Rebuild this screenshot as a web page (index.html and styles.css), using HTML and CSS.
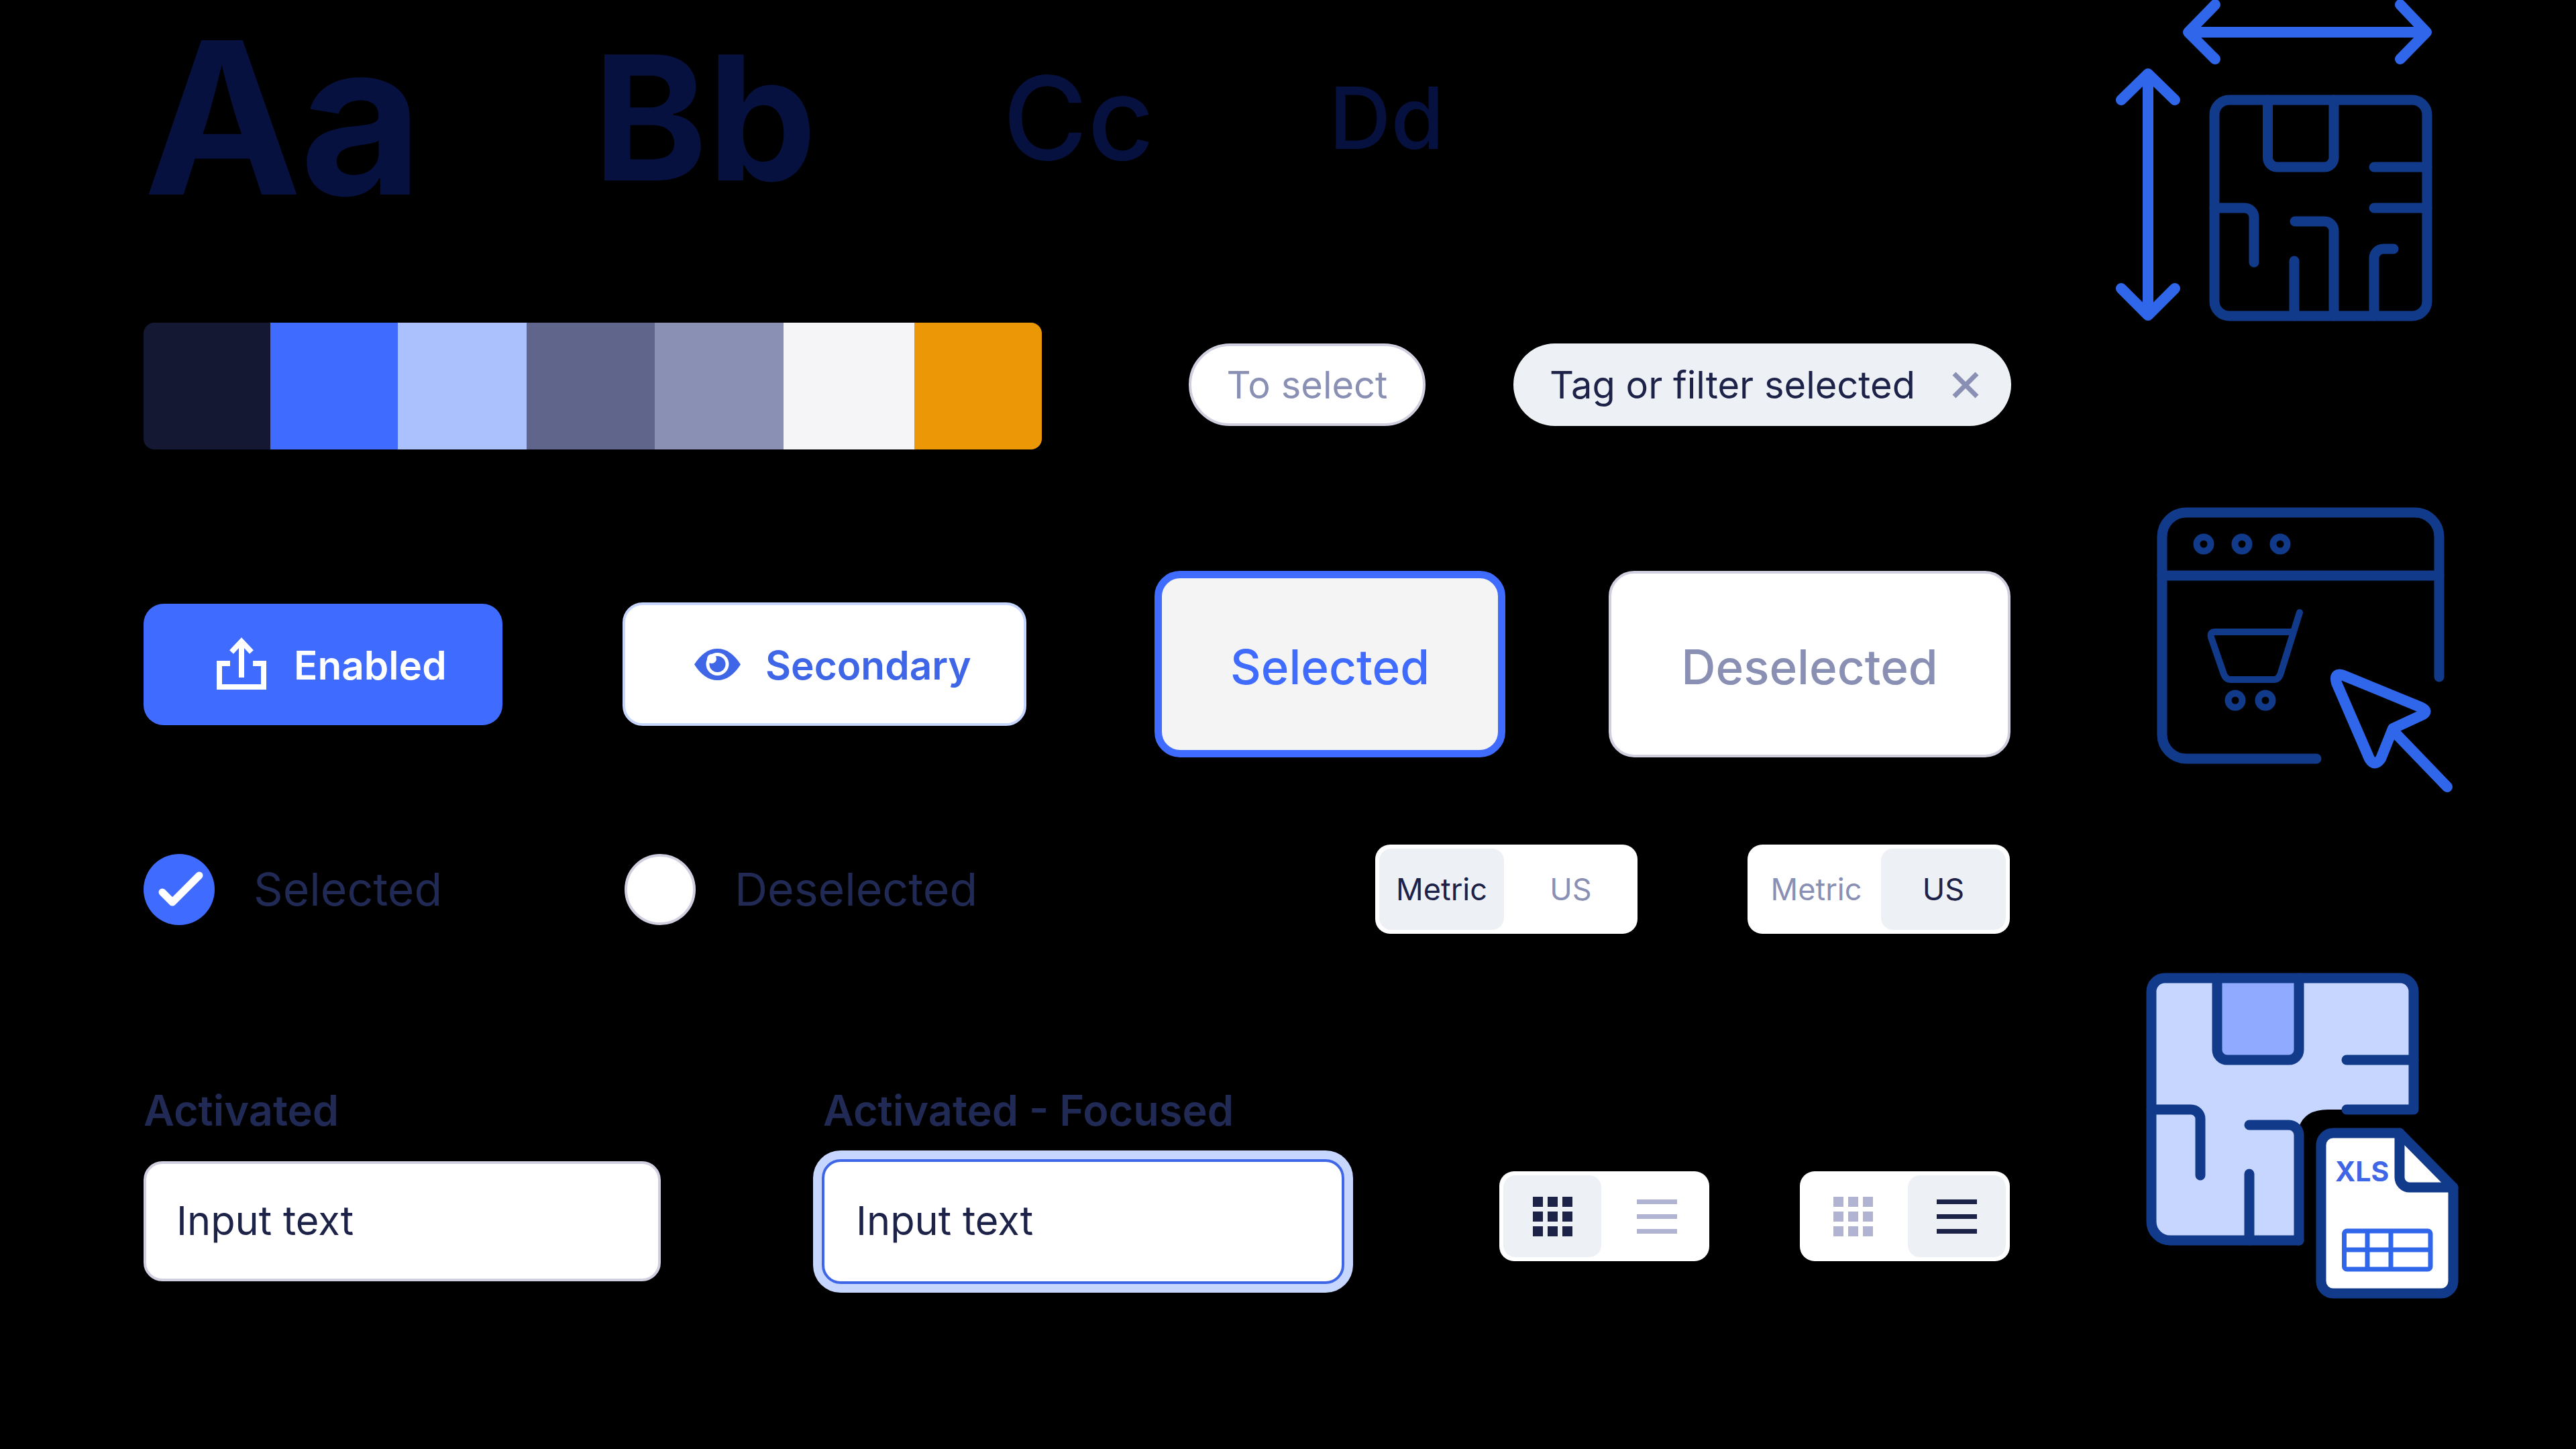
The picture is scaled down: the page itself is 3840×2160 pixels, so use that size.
FILE: index.html
```html
<!DOCTYPE html>
<html lang="en">
<head>
  <meta charset="UTF-8">
  <title>UI kit</title>
  <link rel="stylesheet" href="styles.css">
</head>
<body>
  <div class="page">
    <div class="main">

      <div class="row type-row">
        <span class="type type-aa">Aa</span>
        <span class="type type-bb">Bb</span>
        <span class="type type-cc">Cc</span>
        <span class="type type-dd">Dd</span>
      </div>

      <div class="row palette-row">
        <div class="palette">
          <div class="swatch swatch-navy"></div>
          <div class="swatch swatch-blue"></div>
          <div class="swatch swatch-sky"></div>
          <div class="swatch swatch-slate"></div>
          <div class="swatch swatch-grey"></div>
          <div class="swatch swatch-white"></div>
          <div class="swatch swatch-orange"></div>
        </div>
        <div class="pill pill-idle">To select</div>
        <div class="pill pill-active">
          <span>Tag or filter selected</span>
          <svg class="pill-close" viewBox="0 0 40 40" width="40" height="40">
            <path d="M3 3 L37 37 M37 3 L3 37"/>
          </svg>
        </div>
      </div>

      <div class="row button-row">
        <div class="btn btn-primary">
          <svg class="btn-icon" viewBox="0 0 80 84" width="80" height="84">
            <path d="M23 41 H7 V76 H73 V41 H57"/>
            <path d="M40 62 V8"/>
            <path d="M25 24 L40 8 L55 24"/>
          </svg>
          <span>Enabled</span>
        </div>
        <div class="btn btn-secondary">
          <svg viewBox="0 0 69 47" width="69" height="47">
            <path class="eye-body" d="M0 23.5 C10 8 21 0 34.5 0 C48 0 59 8 69 23.5 C59 39 48 47 34.5 47 C21 47 10 39 0 23.5 Z"/>
            <circle class="eye-white" cx="34.5" cy="23" r="17"/>
            <circle class="eye-body" cx="34.5" cy="23" r="12"/>
            <circle class="eye-white" cx="26" cy="15" r="7"/>
          </svg>
          <span>Secondary</span>
        </div>
        <div class="card card-on">Selected</div>
        <div class="card card-off">Deselected</div>
      </div>

      <div class="row option-row">
        <div class="radio-item radio-item-first">
          <div class="radio radio-on">
            <svg viewBox="0 0 106 106" width="106" height="106">
              <path d="M28 57 L43 72 L83 32"/>
            </svg>
          </div>
          <span>Selected</span>
        </div>
        <div class="radio-item radio-item-second">
          <div class="radio radio-off"></div>
          <span>Deselected</span>
        </div>
        <div class="toggle">
          <div class="opt opt-on opt-fixed">Metric</div>
          <div class="opt opt-nudge">US</div>
        </div>
        <div class="toggle toggle-gap">
          <div class="opt">Metric</div>
          <div class="opt opt-on opt-fixed">US</div>
        </div>
      </div>

      <div class="row field-row">
        <div class="field field-first">
          <div class="field-label">Activated</div>
          <div class="input">Input text</div>
        </div>
        <div class="field field-second">
          <div class="field-label">Activated - Focused</div>
          <div class="input input-focus">Input text</div>
        </div>
        <div class="view-toggle">
          <div class="view-opt view-on"><div class="grid-icon dark"><i></i><i></i><i></i><i></i><i></i><i></i><i></i><i></i><i></i></div></div>
          <div class="view-opt"><div class="lines-icon nudge-right"><i></i><i></i><i></i></div></div>
        </div>
        <div class="view-toggle view-toggle-gap">
          <div class="view-opt"><div class="grid-icon nudge-left"><i></i><i></i><i></i><i></i><i></i><i></i><i></i><i></i><i></i></div></div>
          <div class="view-opt view-on"><div class="lines-icon dark"><i></i><i></i><i></i></div></div>
        </div>
      </div>

    </div>

    <div class="icons">
      <!-- floor plan with dimensions -->
      <svg class="icon icon-plan" viewBox="0 0 500 490" width="500" height="490">
        <g class="line-dark">
          <rect x="161" y="149" width="317" height="322" rx="22"/>
          <path d="M240.5 149 V235 a14 14 0 0 0 14 14 H325 a14 14 0 0 0 14 -14 V149"/>
          <path d="M399 249 H478 M399 310 H478"/>
          <path d="M161 310 H206 a14 14 0 0 1 14 14 V391"/>
          <path d="M281 330 H325 a14 14 0 0 1 14 14 V471"/>
          <path d="M280 389 V471"/>
          <path d="M399 471 V385 a14 14 0 0 1 14 -14 H428"/>
        </g>
        <g class="line-bright">
          <path d="M62 112 V468 M22 149 L62 110 L102 149 M22 430 L62 470 L102 430"/>
          <path d="M124 48 H477 M162 7 L122 48 L162 88 M438 7 L477 48 L438 88"/>
        </g>
      </svg>

      <!-- shop window with cursor -->
      <svg class="icon icon-shop" viewBox="0 0 470 440" width="470" height="440">
        <g class="line-dark">
          <path d="M436 259 V50 a36 36 0 0 0 -36 -36 H59 a36 36 0 0 0 -36 36 V345 a36 36 0 0 0 36 36 H253"/>
          <path d="M23 108 H436"/>
          <path class="thin" d="M228 163 L200 253 Q197 263 190 263 H125 Q118 263 115 255 L96 200 Q94 192 102 192 H217"/>
          <circle class="thin" cx="85" cy="61" r="10.5"/>
          <circle class="thin" cx="142" cy="61" r="10.5"/>
          <circle class="thin" cx="199" cy="61" r="10.5"/>
          <circle class="thin" cx="132" cy="294" r="10.5"/>
          <circle class="thin" cx="177" cy="294" r="10.5"/>
        </g>
        <g class="line-bright">
          <path d="M283 268 Q278 250 296 258 L408 304 Q422 310 410 316 L367 336 L349 381 Q340 394 332 381 Z"/>
          <path d="M370 342 L448 423"/>
        </g>
      </svg>

      <!-- floor plan export -->
      <svg class="icon icon-export" viewBox="0 0 520 520" width="520" height="520">
        <path class="plan-fill" d="M47 28 H398 a20 20 0 0 1 20 20 V224 H290 Q256 224 247 250 V419 H55 a28 28 0 0 1 -28 -28 V48 a20 20 0 0 1 20 -20 Z"/>
        <path class="room-fill" d="M125 28 H247 V150 H125 Z"/>
        <g class="line-dark">
          <path d="M247 419 H55 a28 28 0 0 1 -28 -28 V48 a20 20 0 0 1 20 -20 H398 a20 20 0 0 1 20 20 V224 H318"/>
          <path d="M125 28 V135 a15 15 0 0 0 15 15 H232 a15 15 0 0 0 15 -15 V28"/>
          <path d="M318 150 H418"/>
          <path d="M27 224 H86 a14 14 0 0 1 14 14 V322"/>
          <path d="M173 320 V419"/>
          <path d="M173 247 H232 a15 15 0 0 1 15 15 V419"/>
          <path class="doc-fill" d="M298 259 H397 L477 340 V480 a18 18 0 0 1 -18 18 H298 a18 18 0 0 1 -18 -18 V277 a18 18 0 0 1 18 -18 Z"/>
          <path d="M397 259 V325 a15 15 0 0 0 15 15 H477"/>
        </g>
        <text class="xls" x="301" y="331">XLS</text>
        <g class="table-line">
          <rect x="314.5" y="405" width="128.5" height="57" rx="4"/>
          <path d="M314.5 433 H443 M349 405 V462 M384 405 V462"/>
        </g>
      </svg>
    </div>
  </div>
</body>
</html>
```

FILE: styles.css
```css
* {
  box-sizing: border-box;
}

body {
  margin: 0;
  background: #000;
  font-family: 'Inter', 'Liberation Sans', sans-serif;
}

.page {
  display: flex;
  width: 3840px;
  height: 2160px;
  overflow: hidden;
}

.main {
  width: 3140px;
  padding-left: 214px;
}

.row {
  display: flex;
  align-items: center;
}

/* type specimen */
.type-row {
  height: 352px;
}

.type {
  color: #07113f;
  line-height: 1.1;
}

.type-aa {
  width: 670px;
  font-size: 316px;
  font-weight: 700;
  letter-spacing: -3px;
}

.type-bb {
  width: 611px;
  font-size: 258px;
  font-weight: 700;
}

.type-cc {
  width: 486px;
  font-size: 172px;
  font-weight: 500;
}

.type-dd {
  font-size: 128px;
  font-weight: 500;
}

/* palette and pills */
.palette-row {
  height: 191px;
  margin-top: 128px;
}

.palette {
  display: flex;
  width: 1339px;
  height: 189px;
  border-radius: 16px;
  overflow: hidden;
}

.swatch-navy { width: 189px; background: #141832; }
.swatch-blue { width: 190px; background: #3f6bff; }
.swatch-sky { width: 192px; background: #abc1fd; }
.swatch-slate { width: 191px; background: #5f658b; }
.swatch-grey { width: 192px; background: #8a90b4; }
.swatch-white { width: 195px; background: #f5f5f8; }
.swatch-orange { width: 190px; background: #ec9706; }

.pill {
  display: flex;
  align-items: center;
  justify-content: center;
  height: 123px;
  margin-bottom: 4px;
  border-radius: 62px;
  font-size: 56px;
}

.pill-idle {
  width: 353px;
  margin-left: 219px;
  background: #fff;
  border: 4px solid #cfcfdf;
  color: #8a90b4;
}

.pill-active {
  justify-content: space-between;
  width: 742px;
  margin-left: 131px;
  padding-left: 54px;
  padding-right: 48px;
  background: #edf0f4;
  color: #1c2248;
}

.pill-close path {
  fill: none;
  stroke: #8a90b4;
  stroke-width: 7;
}

/* buttons */
.button-row {
  height: 278px;
  margin-top: 180px;
}

.btn {
  display: flex;
  align-items: center;
  border-radius: 30px;
  font-size: 58.5px;
  font-weight: 600;
}

.btn-primary {
  gap: 38px;
  width: 535px;
  height: 181px;
  padding-left: 106px;
  background: #3f6bff;
  color: #fff;
}

.btn-primary span {
  padding-top: 3px;
}

.btn-icon path {
  fill: none;
  stroke: #fff;
  stroke-width: 8;
}

.btn-secondary {
  gap: 37px;
  width: 602px;
  height: 184px;
  margin-left: 179px;
  padding-left: 103px;
  background: #fff;
  border: 4px solid #c7d6ff;
  color: #3f66e6;
}

.btn-secondary span {
  padding-top: 2px;
}

.eye-body {
  fill: #3f66e6;
}

.eye-white {
  fill: #fff;
}

.card {
  display: flex;
  align-items: center;
  justify-content: center;
  height: 278px;
  padding-top: 8px;
  border-radius: 38px;
  font-size: 71px;
  font-weight: 500;
}

.card-on {
  width: 523px;
  margin-left: 191px;
  background: #f4f4f4;
  border: 11px solid #3f6bff;
  color: #3f6bff;
}

.card-off {
  width: 599px;
  margin-left: 154px;
  background: #fff;
  border: 4px solid #cfcfdf;
  color: #8a90b4;
}

/* radios and unit toggles */
.option-row {
  height: 133px;
  margin-top: 130px;
}

.radio-item {
  display: flex;
  align-items: center;
  gap: 58px;
  color: #212a55;
  font-size: 68px;
}

.radio-item span {
  padding-bottom: 2px;
}

.radio-item-first {
  width: 717px;
}

.radio-item-second {
  width: 1119px;
}

.radio {
  width: 106px;
  height: 106px;
  border-radius: 50%;
}

.radio-on {
  background: #3f6bff;
}

.radio-on svg {
  display: block;
}

.radio-on path {
  fill: none;
  stroke: #fff;
  stroke-width: 11;
  stroke-linecap: round;
  stroke-linejoin: round;
}

.radio-off {
  background: #fff;
  border: 4px solid #cfcfdf;
}

.toggle {
  display: flex;
  width: 391px;
  height: 133px;
  padding: 6px;
  border-radius: 22px;
  background: #fff;
  font-size: 45px;
  color: #8a90b4;
}

.toggle-gap {
  margin-left: 164px;
}

.opt {
  flex: 1;
  display: flex;
  align-items: center;
  justify-content: center;
  border-radius: 18px;
}

.opt-fixed {
  flex: none;
  width: 186px;
}

.opt-on {
  background: #edf0f4;
  color: #1c2248;
}

.opt-nudge {
  padding-left: 6px;
}

/* inputs */
.field-row {
  align-items: flex-start;
  margin-top: 223px;
}

.field-first {
  width: 1011px;
}

.field-second {
  width: 779px;
}

.field-label {
  height: 80px;
  line-height: 80px;
  font-size: 63px;
  font-weight: 600;
  color: #212a55;
}

.field-second .field-label {
  margin-left: 2px;
}

.input {
  display: flex;
  align-items: center;
  width: 771px;
  height: 179px;
  margin-top: 36px;
  padding-left: 45px;
  padding-bottom: 4px;
  border: 4px solid #cfcfdf;
  border-radius: 28px;
  background: #fff;
  font-size: 59.5px;
  color: #1c2248;
}

.input-focus {
  width: 779px;
  height: 186px;
  margin-top: 33px;
  padding-left: 47px;
  border-color: #3f66e6;
  box-shadow: 0 0 0 13px #c7d6ff;
}

.view-toggle {
  display: flex;
  width: 313px;
  height: 134px;
  margin-top: 131px;
  margin-left: 231px;
  padding: 6px;
  border-radius: 22px;
  background: #fff;
}

.view-toggle-gap {
  margin-left: 135px;
}

.view-opt {
  flex: 1;
  display: flex;
  align-items: center;
  justify-content: center;
  border-radius: 18px;
}

.view-on {
  flex: none;
  width: 146px;
  background: #edf0f4;
}

.grid-icon {
  display: grid;
  grid-template-columns: repeat(3, 15px);
  grid-template-rows: repeat(3, 15px);
  gap: 7px;
  width: 59px;
}

.grid-icon i {
  background: #b0b4d2;
}

.lines-icon {
  display: flex;
  flex-direction: column;
  gap: 15px;
  width: 60px;
}

.lines-icon i {
  height: 7px;
  background: #b0b4d2;
}

.dark i {
  background: #1c2248;
}

.nudge-right {
  margin-left: 10px;
}

.nudge-left {
  margin-right: 8px;
}

/* illustrations on the right */
.icons {
  display: flex;
  flex-direction: column;
  align-items: flex-start;
}

.icon {
  display: block;
  flex: none;
}

.icon-shop {
  margin-top: 260px;
  margin-left: 60px;
}

.icon-export {
  margin-top: 240px;
  margin-left: 40px;
}

.line-dark * {
  fill: none;
  stroke: #123a8a;
  stroke-width: 15;
  stroke-linecap: round;
  stroke-linejoin: round;
}

.line-dark .thin {
  stroke-width: 10;
}

.line-bright * {
  fill: none;
  stroke: #2f66ea;
  stroke-width: 16;
  stroke-linecap: round;
  stroke-linejoin: round;
}

.plan-fill {
  fill: #c7d6ff;
}

.room-fill {
  fill: #8faaff;
}

.line-dark .doc-fill {
  fill: #fff;
}

.xls {
  font-size: 41px;
  font-weight: 700;
  fill: #3f66e6;
}

.table-line * {
  fill: none;
  stroke: #2f66ea;
  stroke-width: 7;
}
```
